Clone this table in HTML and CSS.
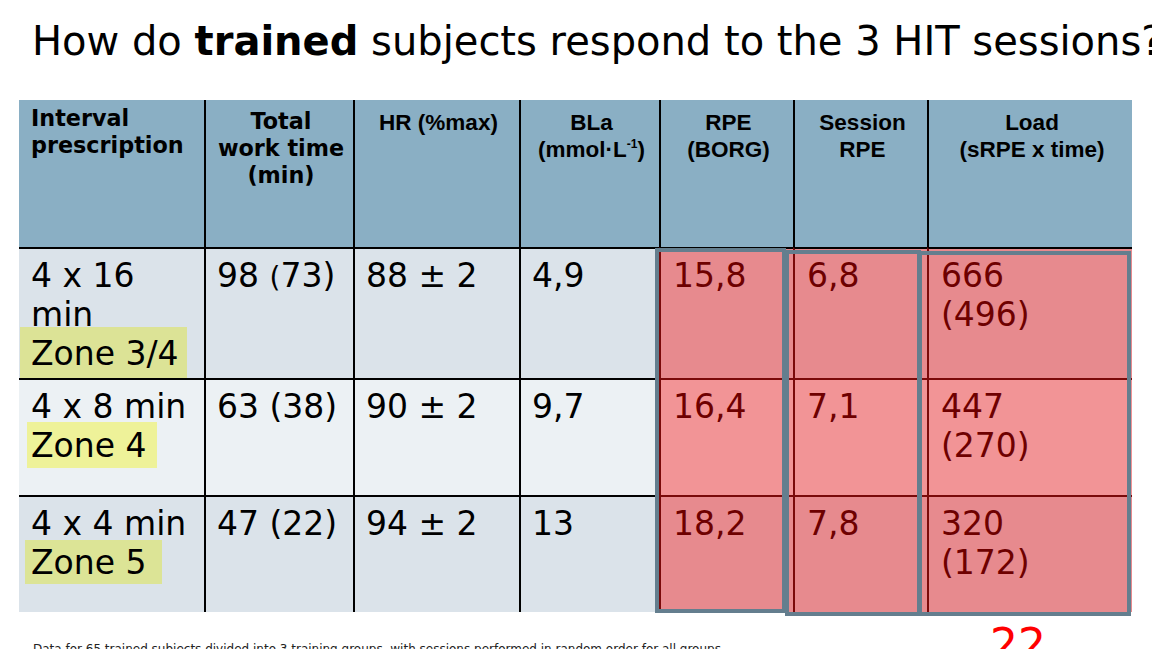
FILE: index.html
```html
<!DOCTYPE html>
<html lang="en">
<head>
<meta charset="utf-8">
<title>HIT sessions</title>
<link rel="stylesheet" href="styles.css">
</head>
<body>
<div class="slide">
  <h1 class="title">How do <b>trained</b> subjects respond to the 3 HIT sessions?</h1>
  <div class="table-wrap">
    <table class="data">
      <colgroup>
        <col class="w1"><col class="w2"><col class="w3"><col class="w4"><col class="w5"><col class="w6"><col class="w7">
      </colgroup>
      <thead>
        <tr class="head">
          <th class="hv left">Interval<br>prescription</th>
          <th class="hv total">Total<br>work time<br>(min)</th>
          <th class="ha">HR (%max)</th>
          <th class="ha">BLa<br>(mmol·L<sup>-1</sup>)</th>
          <th class="ha">RPE<br>(BORG)</th>
          <th class="ha">Session<br>RPE</th>
          <th class="ha">Load<br>(sRPE x time)</th>
        </tr>
      </thead>
      <tbody>
        <tr class="row r1">
          <td>4 x 16<br>min<br><span class="zone z1">Zone 3/4</span></td>
          <td>98 <span class="paren">(</span>73)</td>
          <td>88 ± 2</td>
          <td>4,9</td>
          <td class="red">15,8</td>
          <td class="red">6,8</td>
          <td class="red">666<br>(496)</td>
        </tr>
        <tr class="row r2">
          <td>4 x 8 min<br><span class="zone z2">Zone 4</span></td>
          <td>63 (38)</td>
          <td>90 ± 2</td>
          <td>9,7</td>
          <td class="red">16,4</td>
          <td class="red">7,1</td>
          <td class="red">447<br>(270)</td>
        </tr>
        <tr class="row r3">
          <td>4 x 4 min<br><span class="zone z3">Zone 5</span></td>
          <td>47 (22)</td>
          <td>94 ± 2</td>
          <td>13</td>
          <td class="red">18,2</td>
          <td class="red">7,8</td>
          <td class="red">320<br>(172)</td>
        </tr>
      </tbody>
    </table>
    <div class="box box-rpe"></div>
    <div class="box box-session"></div>
    <div class="box box-load"></div>
  </div>
  <div class="footer">
    <p class="foot-note">Data for 65 trained subjects divided into 3 training groups, with sessions performed in random order for all groups</p>
    <span class="page-no">22</span>
  </div>
</div>
</body>
</html>
```

FILE: styles.css
```css
html, body {
  margin: 0;
  padding: 0;
  background: #ffffff;
}

body {
  font-family: "DejaVu Sans", Verdana, sans-serif;
  color: #000000;
}

.slide {
  width: 1152px;
  height: 649px;
  overflow: hidden;
  position: relative;
}

.title {
  margin: 0;
  padding: 18px 0 0 32px;
  font-size: 40px;
  font-weight: normal;
  line-height: 46px;
  white-space: nowrap;
}

.title b {
  font-weight: bold;
}

.table-wrap {
  position: relative;
  margin: 36px 0 0 19px;
  width: 1113px;
}

.data {
  border-collapse: separate;
  border-spacing: 0;
  table-layout: fixed;
  width: 1113px;
}

.w1 { width: 185px; }
.w2 { width: 149px; }
.w3 { width: 166px; }
.w4 { width: 140px; }
.w5 { width: 134px; }
.w6 { width: 134px; }
.w7 { width: 205px; }

.data th,
.data td {
  vertical-align: top;
  padding: 0 8px 0 11px;
  border-left: 2px solid #000000;
}

.data th:first-child,
.data td:first-child {
  border-left: none;
}

.head {
  height: 147px;
  background: #8aafc4;
}

.data th {
  color: #000000;
  line-height: 27px;
  text-align: center;
  font-weight: bold;
}

.data th.hv {
  font-family: "DejaVu Sans", Verdana, sans-serif;
  font-size: 22.3px;
  padding-top: 5px;
}

.data th.total {
  padding-top: 8px;
}

.data th.ha {
  font-family: "Liberation Sans", Arial, sans-serif;
  font-size: 22.5px;
  padding-top: 9px;
}

.data th.left {
  text-align: left;
  padding-left: 12px;
}

.data sup {
  font-size: 12px;
  line-height: 0;
  vertical-align: 9px;
}

.data td {
  font-size: 33px;
  line-height: 39px;
  padding-top: 7px;
  border-top: 2px solid #000000;
  white-space: nowrap;
}

.data td:first-child {
  padding-left: 12px;
}

.r1 { height: 131px; background: #dbe3ea; }
.r2 { height: 117px; background: #ecf1f4; }
.r3 { height: 117px; background: #dbe3ea; }

.paren {
  font-size: 28px;
}

.data td.red {
  color: #6e0000;
  border-left: 2px solid #7a0a0a;
  padding-left: 12px;
}

.r1 td.red { background: #e78a8e; }
.r2 td.red { background: #f29496; border-top-color: #7a0a0a; }
.r3 td.red { background: #e78a8e; border-top-color: #7a0a0a; }

.zone {
  padding: 3px 10px 2px 10px;
  margin-left: -10px;
}

.z1 { background: #dce396; padding: 7px 8px 5px 11px; margin-left: -11px; }
.z2 { background: #eef299; padding: 4px 10px 3px 4px; margin-left: -4px; }
.z3 { background: #dce496; padding: 3px 15px 2px 6px; margin-left: -6px; }

.box {
  position: absolute;
  border: 4px solid #647e8e;
  box-sizing: border-box;
}

.box-rpe {
  left: 636px;
  top: 148px;
  width: 131px;
  height: 365px;
}

.box-session {
  left: 766px;
  top: 150px;
  width: 136px;
  height: 366px;
}

.box-load {
  left: 899px;
  top: 151px;
  width: 213px;
  height: 365px;
}

.footer {
  display: flex;
  align-items: flex-start;
  margin-top: 11px;
  padding-left: 33px;
}

.foot-note {
  margin: 0;
  width: 957px;
  padding-top: 19px;
  font-size: 12px;
  line-height: 14px;
  color: #222222;
  white-space: nowrap;
  overflow: hidden;
}

.page-no {
  font-size: 44px;
  line-height: 44px;
  color: #ff0000;
}
```
